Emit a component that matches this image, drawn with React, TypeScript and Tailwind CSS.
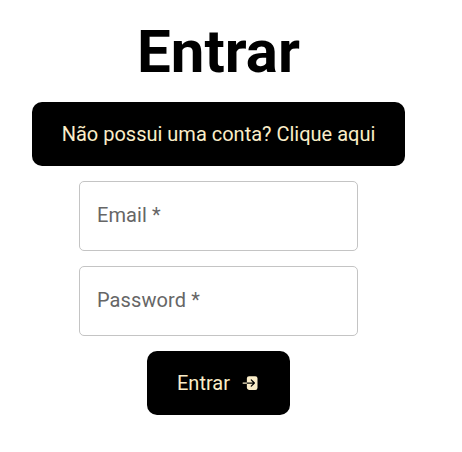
import { IoLogIn } from 'react-icons/io5';

function Field({ label }: { label: string }) {
  return (
    <label className="flex h-[70px] w-[279px] items-center rounded-[5px] border border-[#c4c4c4] px-[17px] pb-[2px] text-[20px] leading-[28px] tracking-[0.1px] text-[#666666]">
      {label} *
    </label>
  );
}

export default function App() {
  return (
    <main className="flex h-[452px] w-[437px] flex-col items-center bg-white font-['Roboto',sans-serif]">
      <h1 className="mt-[17px] text-[60px] leading-[70px] font-bold text-black">Entrar</h1>
      <button className="mt-[15px] flex h-16 w-[373px] items-center justify-center rounded-[10px] bg-black text-[20px] whitespace-nowrap text-[#faedc8]">
        Não possui uma conta? Clique aqui
      </button>
      <form className="mt-[15px] flex flex-col items-center gap-[15px]">
        <Field label="Email" />
        <Field label="Password" />
        <button type="button" className="flex h-16 w-[143px] items-center justify-between rounded-[10px] bg-black px-[30px] text-[20px] text-[#faedc8]">
          Entrar
          <IoLogIn size={20} />
        </button>
      </form>
    </main>
  );
}
